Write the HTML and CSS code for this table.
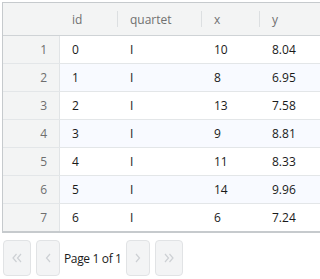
FILE: index.html
```html
<!DOCTYPE html>
<html>
<head>
<meta charset="utf-8">
<link rel="stylesheet" href="styles.css">
</head>
<body>
<div class="grid">
  <div class="row head">
    <div class="c num"></div>
    <div class="c id">id</div>
    <div class="c q">quartet</div>
    <div class="c x">x</div>
    <div class="c y">y</div>
  </div>
  <div class="row"><div class="c num">1</div><div class="c id">0</div><div class="c q">I</div><div class="c x">10</div><div class="c y">8.04</div></div>
  <div class="row alt"><div class="c num">2</div><div class="c id">1</div><div class="c q">I</div><div class="c x">8</div><div class="c y">6.95</div></div>
  <div class="row"><div class="c num">3</div><div class="c id">2</div><div class="c q">I</div><div class="c x">13</div><div class="c y">7.58</div></div>
  <div class="row alt"><div class="c num">4</div><div class="c id">3</div><div class="c q">I</div><div class="c x">9</div><div class="c y">8.81</div></div>
  <div class="row"><div class="c num">5</div><div class="c id">4</div><div class="c q">I</div><div class="c x">11</div><div class="c y">8.33</div></div>
  <div class="row alt"><div class="c num">6</div><div class="c id">5</div><div class="c q">I</div><div class="c x">14</div><div class="c y">9.96</div></div>
  <div class="row last"><div class="c num">7</div><div class="c id">6</div><div class="c q">I</div><div class="c x">6</div><div class="c y">7.24</div></div>
</div>
<div class="pager">
  <button class="btn wide"><svg width="10" height="10" viewBox="0 0 10 10"><polyline points="4.5,1 1,5 4.5,9" /><polyline points="9,1 5.5,5 9,9" /></svg></button>
  <button class="btn"><svg width="6" height="10" viewBox="0 0 6 10"><polyline points="5,1 1.5,5 5,9" /></svg></button>
  <span class="label">Page 1 of 1</span>
  <button class="btn"><svg width="6" height="10" viewBox="0 0 6 10"><polyline points="1,1 4.5,5 1,9" /></svg></button>
  <button class="btn wide"><svg width="10" height="10" viewBox="0 0 10 10"><polyline points="1,1 4.5,5 1,9" /><polyline points="5.5,1 9,5 5.5,9" /></svg></button>
</div>
</body>
</html>
```
FILE: styles.css
```css
html, body {
  margin: 0;
  padding: 0;
  background: #fff;
}
body {
  padding: 2px 0 0 2px;
  font-family: "Open Sans", "Noto Sans", sans-serif;
  font-size: 12px;
  color: #1a1a1a;
  overflow: hidden;
}
.grid {
  width: 400px;
  border: 1px solid #c6cacd;
  border-bottom: 2px solid #c6cacd;
}
.row {
  display: flex;
  height: 27px;
  border-bottom: 1px solid #e3e6e8;
  align-items: center;
}
.row.last {
  border-bottom: none;
}
.row.alt .c {
  background: #f8faff;
}
.row.head {
  height: 32px;
  background: #f3f4f4;
  border-bottom: 1px solid #cfd3d6;
  color: #707070;
}
.c {
  height: 100%;
  display: flex;
  align-items: center;
  padding-left: 12px;
  box-sizing: border-box;
  position: relative;
}
.row .c.num {
  width: 57px;
  justify-content: flex-end;
  padding: 0 12px 0 0;
  background: #f3f4f4;
  border-right: 1px solid #e1e4e6;
  color: #6e6e6e;
}
.id { width: 58px; }
.q { width: 84px; }
.x { width: 58px; }
.y { flex: 1; }
.head .c.num { border-right: none; }
.head .c::after {
  content: "";
  position: absolute;
  right: 0;
  top: 8px;
  height: 16px;
  width: 1px;
  background: #dcdfe1;
}
.head .c.num::after { right: -1px; }
.head .c.y::after { display: none; }
.head .c.num, .head .c { background: #f3f4f4; }
.pager {
  display: flex;
  align-items: center;
  margin-top: 7px;
  margin-left: 1px;
  gap: 5px;
}
.btn {
  height: 36px;
  width: 24px;
  padding: 0;
  border: 1px solid #e1e3e5;
  border-radius: 4px;
  background: #f3f4f5;
  display: flex;
  align-items: center;
  justify-content: center;
}
.btn svg {
  fill: none;
  stroke: #cdd0d4;
  stroke-width: 1.2;
}
.btn.wide { width: 28px; }
.label {
  font-size: 12px;
  letter-spacing: -0.35px;
  color: #1a1a1a;
  margin: 0 -1px;
}
```
